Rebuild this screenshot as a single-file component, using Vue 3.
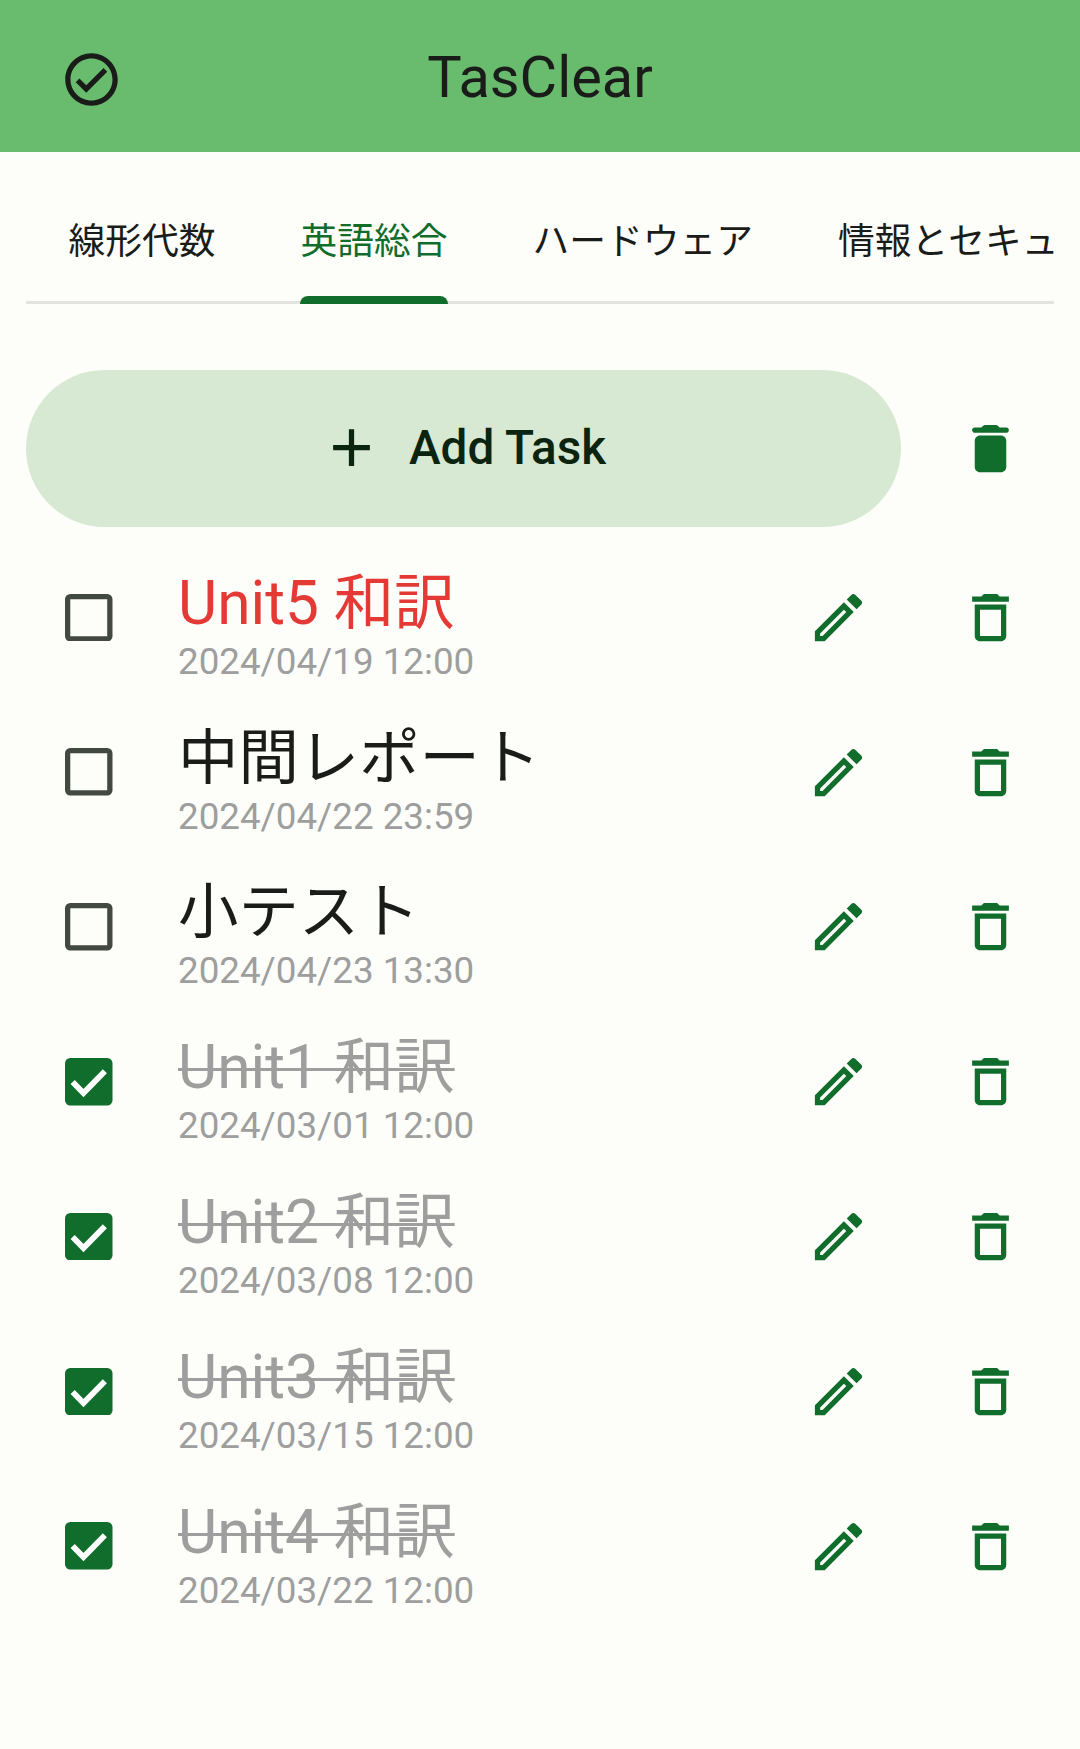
<template>
  <div class="app-root">
    <!-- ヘッダー -->
    <header class="top-bar">
      <svg class="logo" viewBox="0 0 24 24"><path :d="icons.logo" /></svg>
      <h1 class="title">TasClear</h1>
    </header>

    <!-- タブ -->
    <nav class="tabs">
      <div
        v-for="tab in tabs"
        :key="tab"
        class="tab"
        :class="{ active: tab === activeTab }">
        <span class="tab-label">{{ tab }}</span>
      </div>
    </nav>

    <!-- 追加ボタン -->
    <div class="add-row">
      <button class="add-btn">
        <svg class="icon add-icon" viewBox="0 0 24 24"><path :d="icons.add" /></svg>
        <span>Add Task</span>
      </button>
      <div class="icon-btn">
        <svg class="icon" viewBox="0 0 24 24"><path :d="icons.deleteFilled" /></svg>
      </div>
    </div>

    <!-- タスク一覧 -->
    <ul class="task-list">
      <li v-for="task in tasks" :key="task.title + task.date" class="task-row">
        <div class="check-wrap">
          <svg v-if="task.done" class="check" viewBox="0 0 18 18">
            <rect width="18" height="18" rx="2" fill="#116d2b" />
            <path d="M2.9 9.1l4.1 4.2 8.1-8.3" fill="none" stroke="#fff" stroke-width="2.2" />
          </svg>
          <svg v-else class="check" viewBox="0 0 18 18">
            <rect x="1" y="1" width="16" height="16" rx="1" fill="none" stroke="#424940" stroke-width="2" />
          </svg>
        </div>
        <div class="task-body">
          <div class="task-title" :class="{ done: task.done, late: task.late }">{{ task.title }}</div>
          <div class="task-date">{{ task.date }}</div>
        </div>
        <div class="icon-btn">
          <svg class="icon" viewBox="0 0 24 24"><path :d="icons.edit" /></svg>
        </div>
        <div class="icon-btn">
          <svg class="icon" viewBox="0 0 24 24"><path :d="icons.deleteOutline" /></svg>
        </div>
      </li>
    </ul>
  </div>
</template>

<script setup>
const icons = {
  logo: 'M12 2C6.48 2 2 6.48 2 12s4.48 10 10 10 10-4.48 10-10S17.52 2 12 2zm0 18c-4.41 0-8-3.59-8-8s3.59-8 8-8 8 3.59 8 8-3.59 8-8 8zm4.59-12.42L10 14.17l-2.59-2.58L6 13l4 4 8-8z',
  add: 'M19 13h-6v6h-2v-6H5v-2h6V5h2v6h6v2z',
  deleteFilled: 'M6 19c0 1.1.9 2 2 2h8c1.1 0 2-.9 2-2V9c0-1.1-.9-2-2-2H8c-1.1 0-2 .9-2 2v10zM18 4h-2.5l-.71-.71c-.18-.18-.44-.29-.7-.29H9.91c-.26 0-.52.11-.7.29L8.5 4H6c-.55 0-1 .45-1 1s.45 1 1 1h12c.55 0 1-.45 1-1s-.45-1-1-1z',
  deleteOutline: 'M16 9v10H8V9h8m-1.5-6h-5l-1 1H5v2h14V4h-3.5l-1-1zM18 7H6v12c0 1.1.9 2 2 2h8c1.1 0 2-.9 2-2V7z',
  edit: 'M14.06 9.02l.92.92L5.92 19H5v-.92l9.06-9.06M17.66 3c-.25 0-.51.1-.7.29l-1.83 1.83 3.75 3.75 1.83-1.83c.39-.39.39-1.02 0-1.41l-2.34-2.34c-.2-.2-.45-.29-.71-.29zm-3.6 3.19L3 17.25V21h3.75L17.81 9.94l-3.75-3.75z'
}

const tabs = ['線形代数', '英語総合', 'ハードウェア', '情報とセキュリティ']
const activeTab = '英語総合'

const tasks = [
  { title: 'Unit5 和訳', date: '2024/04/19 12:00', late: true },
  { title: '中間レポート', date: '2024/04/22 23:59' },
  { title: '小テスト', date: '2024/04/23 13:30' },
  { title: 'Unit1 和訳', date: '2024/03/01 12:00', done: true },
  { title: 'Unit2 和訳', date: '2024/03/08 12:00', done: true },
  { title: 'Unit3 和訳', date: '2024/03/15 12:00', done: true },
  { title: 'Unit4 和訳', date: '2024/03/22 12:00', done: true }
]
</script>

<style>
body {
  background: #fdfef9;
}
</style>

<style scoped>
.app-root {
  min-height: 1749px;
  background: #fdfef9;
  color: #1a1c19;
  font-family: Roboto, "Noto Sans CJK JP", sans-serif;
}

.top-bar {
  position: relative;
  height: 152px;
  padding-top: 4px;
  box-sizing: border-box;
  background: #69bc6e;
  display: flex;
  align-items: center;
  justify-content: center;
}

.logo {
  position: absolute;
  left: 60px;
  top: 48px;
  width: 63px;
  height: 63px;
  fill: #1a1c19;
}

.title {
  margin: 0;
  font-size: 57.75px;
  font-weight: 400;
  line-height: 1;
}

.tabs {
  display: flex;
  margin: 26px 26px 0;
  height: 126px;
  border-bottom: 3px solid #e3e4df;
  box-sizing: border-box;
  overflow: clip;
  overflow-clip-margin: 3px;
}

.tab {
  position: relative;
  flex: none;
  padding: 0 42.5px;
  display: flex;
  align-items: center;
  font-size: 36.75px;
  white-space: nowrap;
}

.tab-label {
  display: flex;
  align-items: center;
  height: 100%;
  padding-bottom: 4px;
  box-sizing: border-box;
}

.tab.active {
  color: #116d2b;
}

/* インジケーターは区切り線に重ねる */
.tab.active::after {
  content: '';
  position: absolute;
  left: 42px;
  right: 42.5px;
  bottom: -3px;
  height: 8px;
  background: #116d2b;
  border-radius: 8px 8px 0 0;
}

.add-row {
  display: flex;
  align-items: center;
  margin: 66px 27px 0 26px;
}

.add-btn {
  flex: 1;
  height: 157px;
  border: 0;
  border-radius: 79px;
  background: #d7e8d3;
  color: #0a2410;
  font-family: inherit;
  font-size: 47.7px;
  font-weight: 500;
  display: flex;
  align-items: center;
  justify-content: center;
  gap: 26px;
  padding: 0 1px 2px 0;
}

.icon-btn {
  flex: none;
  width: 126px;
  height: 126px;
  margin-left: 26px;
  display: flex;
  align-items: center;
  justify-content: center;
}

.icon {
  width: 63px;
  height: 63px;
  fill: #116d2b;
}

.add-icon.icon {
  fill: #0a2410;
}

.task-list {
  list-style: none;
  margin: 13px 27px 0 26px;
  padding: 0;
}

.task-row {
  display: flex;
  align-items: center;
  height: 154.8px;
}

.check-wrap {
  flex: none;
  width: 126px;
  display: flex;
  justify-content: center;
}

.check {
  width: 47.5px;
  height: 47.5px;
}

.task-body {
  flex: 1;
  min-width: 0;
  margin-left: 26px;
  padding-top: 17px;
}

.task-title {
  font-size: 60.4px;
  line-height: 72px;
}

.task-title.late {
  color: #e53935;
}

.task-title.done {
  color: #9e9e9e;
  text-decoration: line-through;
  text-decoration-thickness: 3px;
}

.task-date {
  font-size: 36.75px;
  line-height: 44px;
  color: #9e9e9e;
}
</style>
